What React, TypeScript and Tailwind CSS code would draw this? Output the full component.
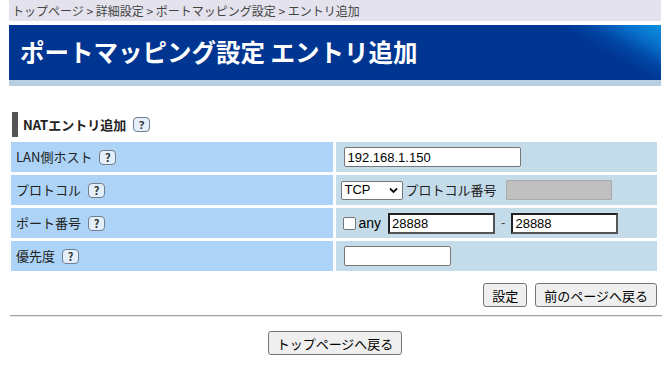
import React from 'react';

const jp = "font-['Noto_Sans_CJK_JP',sans-serif]";
const ar = "font-['Liberation_Sans','Noto_Sans_CJK_JP',sans-serif]";

function Help() {
  return (
    <span className="inline-flex items-center justify-center w-[17px] h-[15px] ml-[7px] rounded-[4px] border border-[#6f7f8f] bg-[#e3effa] text-[11px] leading-none font-bold text-[#333]">
      ?
    </span>
  );
}

function Label({ text }: { text: string }) {
  return (
    <div className={`flex items-center pl-[5px] bg-[#add4f7] text-[13px] text-[#222] ${jp}`}>
      {text}
      <Help />
    </div>
  );
}

function Btn({ children }: { children: React.ReactNode }) {
  return (
    <button className={`h-[24px] px-[8px] rounded-[3px] border border-[#767676] bg-[#efefef] text-[13px] leading-none text-black ${jp}`}>
      {children}
    </button>
  );
}

export default function App() {
  return (
    <div className="w-[670px] h-[367px] bg-white overflow-hidden">
      <div className="px-[9px]">
        <div className={`h-[21px] flex items-center pl-[3px] bg-[#e4e3ed] text-[12px] text-[#444] ${jp}`}>
          トップページ &gt; 詳細設定 &gt; ポートマッピング設定 &gt; エントリ追加
        </div>
        <div className="mt-[4px] h-[55px] flex items-center pl-[11px] bg-[linear-gradient(210deg,#0b92df_0%,#0870cc_5%,#0045a3_10%,#003592_14%,#003592_100%)]">
          <h1 className={`text-[24.5px] font-bold text-white leading-none ${jp}`}>ポートマッピング設定 エントリ追加</h1>
        </div>
        <div className="h-[6px] bg-[#b7cfdf]" />
      </div>

      <div className="px-[11px] pr-[13px]">
        <div className="mt-[26px] flex items-center h-[25px]">
          <div className="w-[6px] h-[25px] ml-[1px] bg-[#555]" />
          <span className={`ml-[5px] text-[13px] font-bold text-[#222] ${jp}`}>NATエントリ追加</span>
          <Help />
        </div>

        <div className="mt-[5px] grid grid-cols-2 gap-[3px] auto-rows-[30px]">
          <Label text="LAN側ホスト" />
          <div className="flex items-center pl-[8px] bg-[#c4dce9]">
            <input
              defaultValue="192.168.1.150"
              className={`w-[177px] h-[20px] px-[3px] bg-white border border-[#767676] rounded-[2px] text-[13px] text-black outline-none ${ar}`}
            />
          </div>

          <Label text="プロトコル" />
          <div className="flex items-center pl-[5px] bg-[#c4dce9]">
            <div className={`relative w-[62px] h-[19px] bg-white border border-[#767676] rounded-[2px] text-[13px] text-black flex items-center pl-[3px] ${ar}`}>
              TCP
              <svg className="absolute right-[4px] top-[5px]" width="9" height="7" viewBox="0 0 9 7">
                <path d="M1 1.5 L4.5 5 L8 1.5" stroke="#111" strokeWidth="1.8" fill="none" />
              </svg>
            </div>
            <span className={`ml-[3px] text-[13px] text-[#222] ${jp}`}>プロトコル番号</span>
            <div className="ml-[9px] w-[106px] h-[20px] bg-[#c0c0c0] border border-[#a9a9a9] rounded-[1px]" />
          </div>

          <Label text="ポート番号" />
          <div className={`flex items-center pl-[7px] bg-[#c4dce9] text-[13px] text-black ${ar}`}>
            <span className="w-[13px] h-[13px] rounded-[2px] border border-[#767676] bg-white" />
            <span className="ml-[3px] text-[14px]">any</span>
            <input
              defaultValue="28888"
              className={`ml-[7px] w-[107px] h-[21px] px-[2px] bg-white border-2 border-[#222] border-b-[#555] border-r-[#555] text-[13px] outline-none ${ar}`}
            />
            <span className="ml-[6px] text-[#444]">-</span>
            <input
              defaultValue="28888"
              className={`ml-[6px] w-[107px] h-[21px] px-[2px] bg-white border-2 border-[#222] border-b-[#555] border-r-[#555] text-[13px] outline-none ${ar}`}
            />
          </div>

          <Label text="優先度" />
          <div className="flex items-center pl-[8px] bg-[#c4dce9]">
            <input className={`w-[107px] h-[20px] px-[3px] bg-white border border-[#767676] rounded-[2px] text-[13px] outline-none ${ar}`} />
          </div>
        </div>

        <div className="mt-[12px] flex justify-end gap-[8px]">
          <Btn>設定</Btn>
          <Btn>前のページへ戻る</Btn>
        </div>
      </div>

      <div className="mx-[10px] mr-[8px] mt-[8px] h-[2px] border-t border-[#a0a0a0] bg-[#e6e6e6]" />

      <div className="mt-[14px] flex justify-center">
        <Btn>トップページへ戻る</Btn>
      </div>
    </div>
  );
}
